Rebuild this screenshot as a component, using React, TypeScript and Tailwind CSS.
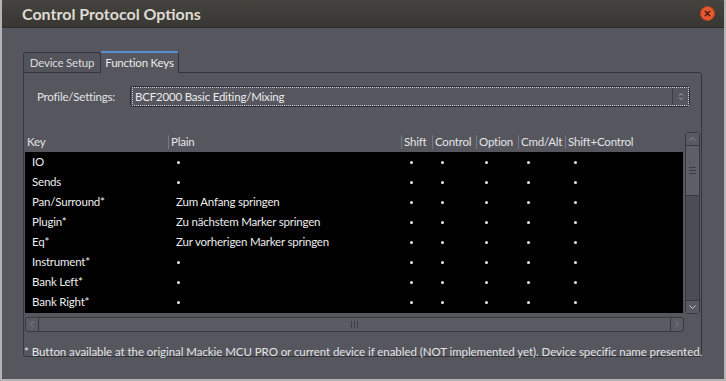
import React from "react";

const rows: [string, string][] = [
  ["IO", ""],
  ["Sends", ""],
  ["Pan/Surround*", "Zum Anfang springen"],
  ["Plugin*", "Zu nächstem Marker springen"],
  ["Eq*", "Zur vorherigen Marker springen"],
  ["Instrument*", ""],
  ["Bank Left*", ""],
  ["Bank Right*", ""],
];

const cols = [
  { name: "Key", w: "w-[143px]" },
  { name: "Plain", w: "w-[233px]" },
  { name: "Shift", w: "w-[31px]" },
  { name: "Control", w: "w-[44px]" },
  { name: "Option", w: "w-[42px]" },
  { name: "Cmd/Alt", w: "w-[47px]" },
  { name: "Shift+Control", w: "flex-1" },
];

function Dot() {
  return <div className="ml-[9px] w-[3px] h-[3px] rounded-full bg-[#e8e8e8]" />;
}

export default function App() {
  return (
    <div
      className="w-[726px] h-[381px] bg-[#55565e] flex flex-col border-x-2 border-b-2 border-[#b4b4b4] text-[11.5px] tracking-[-0.2px] text-[#e4e4e4] overflow-hidden"
      style={{ fontFamily: 'Lato, "Noto Sans", sans-serif' }}
    >
      {/* Title bar */}
      <div className="h-[28px] shrink-0 -mx-[2px] bg-gradient-to-b from-[#44433e] to-[#383733] rounded-t-[5px] flex items-center pl-[22px] pr-[11px] border-b border-[#2e2d2a]">
        <div className="font-bold text-[16px] tracking-[0px] text-[#dfdbd2]">Control Protocol Options</div>
        <div className="ml-auto w-[15px] h-[15px] rounded-full bg-[#e9582f] border border-[#b5401f] flex items-center justify-center">
          <svg width="7" height="7" viewBox="0 0 7 7">
            <path d="M1.2 1.2 L5.8 5.8 M5.8 1.2 L1.2 5.8" stroke="#3a1a10" strokeWidth="1.3" strokeLinecap="round" />
          </svg>
        </div>
      </div>

      {/* Body */}
      <div className="flex flex-col pl-[21px] pr-[22px] pt-[23px]">
        {/* Tabs */}
        <div className="flex items-end h-[21px]">
          <div className="h-[20px] w-[78px] whitespace-nowrap border border-b-0 border-[#35363b] rounded-t-[3px] bg-[#52535b] flex items-center justify-center text-[#dcdcdc]">
            Device Setup
          </div>
          <div className="h-[22px] w-[79px] whitespace-nowrap -ml-[1px] border border-b-0 border-[#35363b] border-t-[2px] border-t-[#5a8fd0] rounded-t-[3px] bg-[#55565e] flex items-center justify-center text-[#ececec] relative z-10 -mb-[1px]">
            Function Keys
          </div>
        </div>

        {/* Panel */}
        <div className="border border-[#35363b] rounded-b-[3px] rounded-tr-[3px] h-[285px] flex flex-col">
          {/* Profile row */}
          <div className="flex items-center mt-[13px] pl-[13px] pr-[11px] h-[21px]">
            <div className="w-[93px] text-[#e4e4e4]">Profile/Settings:</div>
            <div className="flex-1 h-[21px] border border-[#2f3035] rounded-[3px] bg-[#55565e] flex items-center">
              <div className="flex-1 h-[19px] border border-dotted border-[#d0d0d0] ml-[1px] flex items-center">
                <div className="pl-[2px] text-[#ececec]">BCF2000 Basic Editing/Mixing</div>
                <div className="ml-auto w-[16px] h-full border-l border-[#3c3d42] flex items-center justify-center">
                  <svg width="6" height="9" viewBox="0 0 6 9">
                    <path d="M1 3.5 L3 1.5 L5 3.5 M1 5.5 L3 7.5 L5 5.5" stroke="#a8a8ae" strokeWidth="1" fill="none" />
                  </svg>
                </div>
              </div>
            </div>
          </div>

          {/* Table + vertical scrollbar */}
          <div className="flex mt-[25px] pl-[1px] pr-[1px]">
            <div className="flex-1 flex flex-col">
              {/* Header */}
              <div className="flex h-[20px] items-center">
                {cols.map((c, i) => (
                  <div
                    key={c.name}
                    className={`${c.w} h-[14px] flex items-center whitespace-nowrap ${i === 0 ? "pl-[2px]" : "pl-[2px] border-l border-[#777880]"} text-[#e4e4e4]`}
                  >
                    {c.name}
                  </div>
                ))}
              </div>
              {/* Body */}
              <div className="bg-black h-[161px] mr-[2px] flex flex-col">
                {rows.map(([k, p]) => (
                  <div key={k} className="flex h-[20px] items-center text-[#ededed]">
                    <div className="w-[143px] pl-[7px]">{k}</div>
                    <div className="w-[233px] flex items-center">{p ? <span className="pl-[8px]">{p}</span> : <Dot />}</div>
                    <div className="w-[31px] flex items-center"><Dot /></div>
                    <div className="w-[44px] flex items-center"><Dot /></div>
                    <div className="w-[42px] flex items-center"><Dot /></div>
                    <div className="w-[47px] flex items-center"><Dot /></div>
                    <div className="flex-1 flex items-center"><Dot /></div>
                  </div>
                ))}
              </div>
            </div>
            {/* Vertical scrollbar */}
            <div className="w-[15px] h-[182px] border border-[#38393e] rounded-[3px] bg-[#4c4d54] flex flex-col">
              <div className="h-[13px] border-b border-[#38393e] flex items-center justify-center bg-[#585961]">
                <svg width="7" height="4" viewBox="0 0 7 4">
                  <path d="M0.5 3.5 L3.5 0.5 L6.5 3.5" stroke="#8a8b92" strokeWidth="1" fill="none" />
                </svg>
              </div>
              <div className="h-[50px] bg-[#5d5e66] border-b border-[#38393e] flex flex-col items-center justify-center gap-[2px]">
                <div className="w-[7px] h-[1px] bg-[#3c3d42]" />
                <div className="w-[7px] h-[1px] bg-[#3c3d42]" />
                <div className="w-[7px] h-[1px] bg-[#3c3d42]" />
              </div>
              <div className="flex-1" />
              <div className="h-[13px] border-t border-[#38393e] flex items-center justify-center bg-[#585961]">
                <svg width="7" height="4" viewBox="0 0 7 4">
                  <path d="M0.5 0.5 L3.5 3.5 L6.5 0.5" stroke="#c8c8cc" strokeWidth="1" fill="none" />
                </svg>
              </div>
            </div>
          </div>

          {/* Horizontal scrollbar */}
          <div className="flex mt-[3px] pl-[1px] pr-[17px]">
            <div className="flex-1 h-[15px] border border-[#38393e] rounded-[3px] bg-[#5a5b63] flex">
              <div className="w-[13px] border-r border-[#38393e] flex items-center justify-center">
                <svg width="4" height="7" viewBox="0 0 4 7">
                  <path d="M3.5 0.5 L0.5 3.5 L3.5 6.5" stroke="#7e7f86" strokeWidth="1" fill="none" />
                </svg>
              </div>
              <div className="flex-1 flex items-center justify-center gap-[2px]">
                <div className="w-[1px] h-[7px] bg-[#3c3d42]" />
                <div className="w-[1px] h-[7px] bg-[#3c3d42]" />
                <div className="w-[1px] h-[7px] bg-[#3c3d42]" />
              </div>
              <div className="w-[13px] border-l border-[#38393e] flex items-center justify-center">
                <svg width="4" height="7" viewBox="0 0 4 7">
                  <path d="M0.5 0.5 L3.5 3.5 L0.5 6.5" stroke="#7e7f86" strokeWidth="1" fill="none" />
                </svg>
              </div>
            </div>
          </div>

          {/* Footnote */}
          <div className="mt-[11px] text-[#e4e4e4] whitespace-nowrap tracking-[-0.06px]">
            * Button available at the original Mackie MCU PRO or current device if enabled (NOT implemented yet). Device specific name presented.
          </div>
        </div>
      </div>
    </div>
  );
}
